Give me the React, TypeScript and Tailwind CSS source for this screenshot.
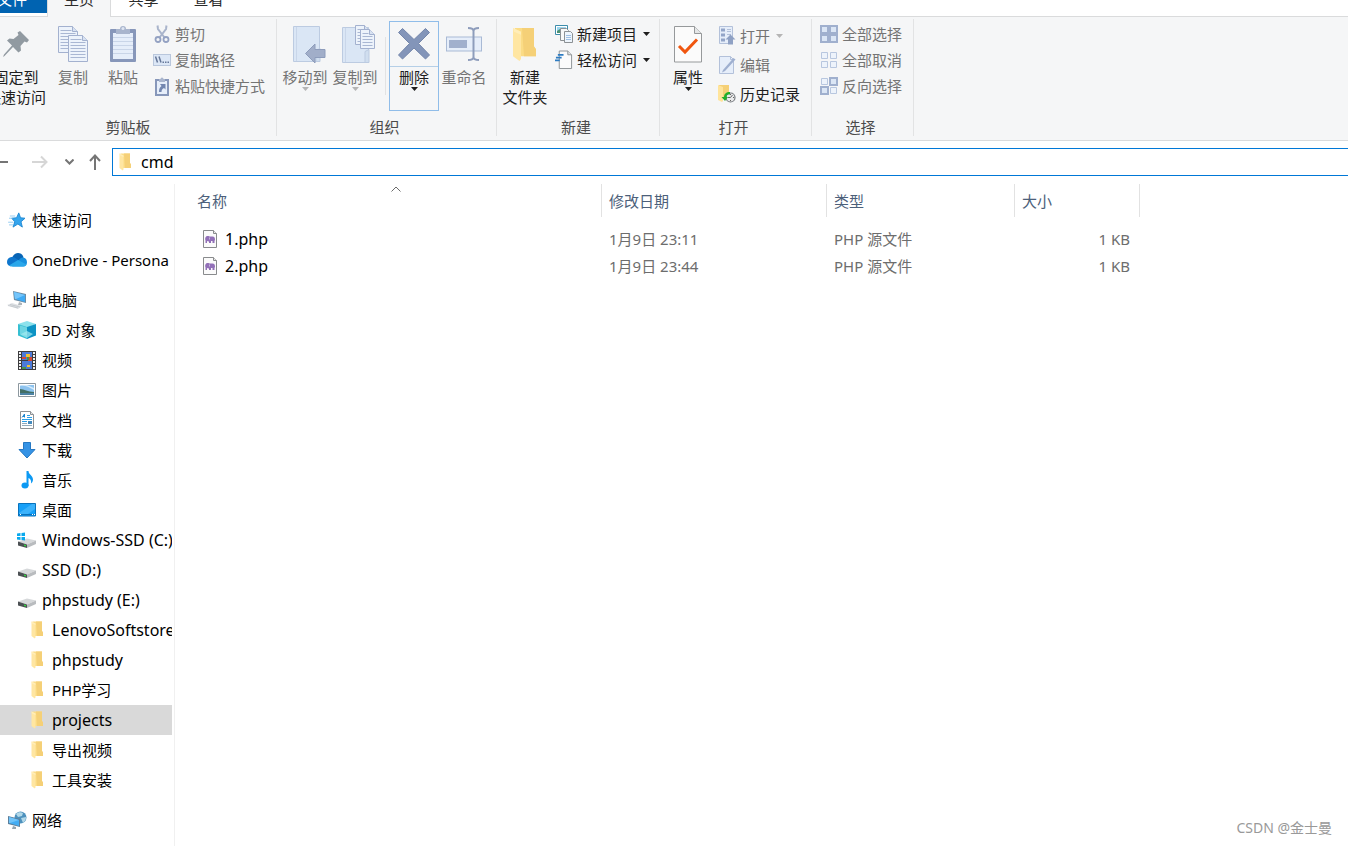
import type { ReactNode } from "react";
import clsx from "clsx";

/* ---------- ribbon icons ---------- */

function PinIcon() {
  return (
    <svg width="28" height="28" viewBox="0 0 28 28" fill="#919aa1">
      <path d="M18 1 27 10 25 12.500 22.500 11.500 18.500 16 19 20.500 16.500 22.500 11 17 2.500 26 1 27 2 24.500 10 15.500 5 10.500 7.500 8.500 11.500 9 16.500 5 15.500 2.500Z" />
    </svg>
  );
}

function Sheet({ x, y, w, h, lines }: { x: number; y: number; w: number; h: number; lines: number[] }) {
  const fold = 5;
  return (
    <g stroke="#a3b1cf">
      <path d={`M${x} ${y}h${w - fold}l${fold} ${fold}v${h - fold}h${-w}z`} fill="#edf3fb" />
      <path d={`M${x + w - fold} ${y}v${fold}h${fold}`} fill="#d8e2f2" />
      {lines.map((l) => (
        <path key={l} d={`M${x + 2} ${y + l}h${l < fold + 1 ? w - fold - 3 : w - 4}`} stroke="#a9b7d3" />
      ))}
    </g>
  );
}

function CopyIcon() {
  return (
    <svg width="32" height="38" viewBox="0 0 32 38" fill="none">
      <Sheet x={1.5} y={1.5} w={19} h={26} lines={[4, 7, 10, 13, 16, 19, 22]} />
      <Sheet x={11.5} y={10.5} w={19} h={26} lines={[4, 7, 10, 13, 16, 19, 22]} />
    </svg>
  );
}

function PasteIcon() {
  return (
    <svg width="28" height="38" viewBox="0 0 28 38">
      <rect x="1" y="4" width="26" height="33" rx="1" fill="#8797ba" />
      <path d="M4 8h20v26H4z" fill="#e6eefa" />
      <path d="M4 12.500h20M4 16.500h20M4 20.500h20M4 24.500h20M4 28.500h20" stroke="#c9d5e8" />
      <path d="M7 4h4a3 3 0 0 1 6 0h4v5H7z" fill="#a9b5cd" />
      <circle cx="14" cy="3.5" r="1.500" fill="#dfe6f2" />
    </svg>
  );
}

function CutIcon() {
  return (
    <svg width="18" height="18" viewBox="0 0 18 18" fill="none" stroke="#93a1c2">
      <path d="M4.500 0.500 5 4 11.500 12.500M13.500 0.500 13 4 6.500 12.500" stroke="#a9b4cb" strokeWidth="2" />
      <ellipse cx="5" cy="14.5" rx="2.5" ry="2.5" strokeWidth="1.8" />
      <ellipse cx="13" cy="14.5" rx="2.5" ry="2.5" strokeWidth="1.8" />
    </svg>
  );
}

function PathIcon() {
  return (
    <svg width="18" height="12" viewBox="0 0 18 12">
      <rect x=".5" y=".5" width="17" height="11" fill="#dce7f6" stroke="#b9c7dc" />
      <path d="M2.500 2.500 4.500 8.500M6 2.500 8 8.500" stroke="#667899" strokeWidth="1.5" />
      <path d="M9.500 7.500H11V9H9.500zM12 7.500h1.500V9H12zM14.500 7.500H16V9h-1.500z" fill="#667899" />
    </svg>
  );
}

function PasteShortcutIcon() {
  return (
    <svg width="14" height="19" viewBox="0 0 14 19">
      <path d="M0 2h14v17H0z" fill="#8797ba" />
      <path d="M2 4h10v13H2z" fill="#e6eefa" />
      <path d="M4 2h1.500a1.500 1.500 0 0 1 3 0H10v3H4z" fill="#a9b5cd" />
      <path d="M5 7h5.500v5.500L9 11c-2 1-2.500 2-2.500 4H4c0-3 .5-4.500 2.500-6z" fill="#7387b0" />
    </svg>
  );
}

function Book() {
  return (
    <>
      <path d="M.5 1.500h26v35H.5z" fill="#dae6f5" stroke="#bccbe1" />
      <path d="M3.500 2v34" stroke="#c9d6e9" />
      <path d="M23 36.500v-11l4-2v13z" fill="#d0deef" stroke="#bccbe1" />
    </>
  );
}

function MoveToIcon() {
  return (
    <svg width="41" height="39" viewBox="-8 0 41 39">
      <Book />
      <path d="M12.500 28.500 22 19v5.500h10v8H22V38z" fill="#a1aec9" stroke="#8d9cbb" />
    </svg>
  );
}

function CopyToIcon() {
  return (
    <svg width="42" height="39" viewBox="-8 0 42 39">
      <g transform="translate(0 1)">
        <Book />
      </g>
      <Sheet x={13.5} y={0.5} w={14} h={19} lines={[4, 7, 10, 13, 16]} />
      <Sheet x={18.5} y={4.5} w={14} h={19} lines={[4, 7, 10, 13, 16]} />
    </svg>
  );
}

function DeleteIcon() {
  return (
    <svg width="34" height="34" viewBox="0 0 34 34">
      <path
        d="M5.500 1.500 17 12.500 28.500 1.500 32.500 5.500 21.500 16.500 32.500 28 28.500 32 17 21 5.500 32 1.500 28 12.500 16.500 1.500 5.500Z"
        fill="#8395b9"
        stroke="#7486ab"
      />
    </svg>
  );
}

function RenameIcon() {
  return (
    <svg width="38" height="36" viewBox="0 0 38 36" fill="none">
      <rect x="1.5" y="11" width="35" height="14" fill="#e6eefa" stroke="#a9bad5" />
      <path d="M4 14h18v8H4z" fill="#a1b0cd" />
      <path
        d="M23 2c3.500 0 5.500 1 5.500 3v26c0 2-2 3-5.500 3M34 2c-3.500 0-5.500 1-5.500 3v26c0 2 2 3 5.500 3"
        stroke="#8e9dbc"
        strokeWidth="2"
      />
    </svg>
  );
}

function FolderIcon({ large = false }: { large?: boolean }) {
  return (
    <svg width={large ? 26 : 13} height={large ? 35 : 18} viewBox="0 0 26 36" preserveAspectRatio="none">
      <path d="M3 1h19v19l2 3v7H3z" fill="#fbdc86" />
      <path d="M10 1h12v19l2 3v7H12z" fill="#f5d077" />
      <path d="M1 1 9 5v28l-1.500 2L1 30z" fill="#ffe6a2" />
      <path d="M1 1 9 5v3L2 5z" fill="#ffedb9" />
    </svg>
  );
}

function NewItemIcon() {
  return (
    <svg width="18" height="18" viewBox="0 0 18 18">
      <path d="M.5.500h12v9H.5z" fill="#fff" stroke="#3d8dab" />
      <path d="M2 2h9v6H2z" fill="#9bd6ef" />
      <path d="M2 6 5 4l3 4H2z" fill="#4d9274" />
      <path d="M5.500 3.500h6l2 2v10h-8z" fill="#f7f8f8" stroke="#8c9194" />
      <path d="M9.500 6.500h6l2 2v9h-8z" fill="#eef5fc" stroke="#8c9194" />
      <path d="M11 10.500h5M11 12.500h5M11 14.500h5" stroke="#9fc0e4" />
    </svg>
  );
}

function EasyAccessIcon() {
  return (
    <svg width="19" height="20" viewBox="0 0 19 20">
      <path d="M4.500.500h9l4 4v14.500h-13z" fill="#fbfbfb" stroke="#8c9194" />
      <path d="M13.500.500v4h4" fill="#e2e4e5" stroke="#8c9194" />
      <path d="M3 4.500h6M1 7.500h6M0 10.500h5" stroke="#2e7cc2" strokeWidth="1.8" />
    </svg>
  );
}

function PropertiesIcon() {
  return (
    <svg width="30" height="37" viewBox="0 0 30 37">
      <path d="M1.500.500h20l7 7v28.500h-27z" fill="#fbfbfb" stroke="#96999b" />
      <path d="M21.500.500v7h7" fill="#e5e7e8" stroke="#96999b" />
      <path d="m6 20 6 6 12-12.500" fill="none" stroke="#f0560f" strokeWidth="3" />
    </svg>
  );
}

function OpenIcon() {
  return (
    <svg width="17" height="19" viewBox="0 0 17 19">
      <path d="M.5.500h13v17H.5z" fill="#e6eefa" stroke="#b3c1da" />
      <path d="M2 2.500h4v3H2zM2 7.500h4v3H2zM2 12.500h4v3H2z" fill="#93a5c8" />
      <path d="M8 3.500h4M8 5.500h4M8 8.500h4" stroke="#b3c1da" />
      <path d="m11.500 8.500 5 5h-2.500v5H9v-5H6.500z" fill="#8fa1c4" />
    </svg>
  );
}

function EditIcon() {
  return (
    <svg width="17" height="18" viewBox="0 0 17 18">
      <path d="M.5.500h11l3 3v14H.5z" fill="#e6eefa" stroke="#b3c1da" />
      <path d="M11.500.500v3h3" fill="none" stroke="#b3c1da" />
      <path d="M4 14 14.500 2l2 1.500L6 15l-3 1.500z" fill="#9fb0d0" />
    </svg>
  );
}

function HistoryIcon() {
  return (
    <svg width="18" height="18" viewBox="0 0 18 18">
      <path d="M1 0h10v14H1z" fill="#f5d077" />
      <path d="M0 0 5 2v14l-1 1-4-2z" fill="#ffe49b" />
      <circle cx="12.5" cy="12.5" r="4.5" fill="#e9eaeb" stroke="#777c80" strokeWidth="1.2" />
      <path d="m12.500 12.500 2-2.500M12.500 12.500H10M12.500 9v1M12.500 15v1M16 12.500h-1" stroke="#666" />
      <path d="M12 7c-4 0-6 2-6 5H3.500L7 16l3-4H8.500c0-2 1-2.500 3.500-2.500z" fill="#21b02b" />
    </svg>
  );
}

function SelectionIcon({ filled }: { filled: boolean[] }) {
  return (
    <svg width="18" height="18" viewBox="0 0 18 18">
      {filled.map((on, i) => {
        const x = (i % 2) * 9;
        const y = Math.floor(i / 2) * 9;
        return on ? (
          <g key={i}>
            <path d={`M${x} ${y}h9v9h-9z`} fill="#a0b0ce" />
            <path d={`M${x + 2} ${y + 2}h5v5h-5z`} fill="#dbe6f5" />
          </g>
        ) : (
          <path key={i} d={`M${x + 1.5} ${y + 1.5}h6v6h-6z`} fill="#edf3fb" stroke="#b8c7df" />
        );
      })}
    </svg>
  );
}

function Caret() {
  return (
    <svg width="7" height="4" viewBox="0 0 7 4" fill="currentColor">
      <path d="M0 0h7L3.500 4z" />
    </svg>
  );
}

/* ---------- navigation pane icons ---------- */

function QuickAccessIcon() {
  return (
    <svg width="18" height="16" viewBox="0 0 20 18">
      <path d="m12 1 2 5.500 5 .5-4.500 4 1.500 6-5-3.500L5.500 17l2-6L4 7l5.500-.5z" fill="#34a5ee" stroke="#1c86d1" />
      <path d="M2 4.500h6M1 7h4M0 11.500h6M1 14.500h5" stroke="#8cc8f0" />
    </svg>
  );
}

function OneDriveIcon() {
  return (
    <svg width="20" height="14" viewBox="0 0 20 14">
      <path d="M5 5C6 2 8.500 0 11 0c3 0 5 2 5.500 4.500L10 9z" fill="#0864b5" />
      <path d="M4.500 4C6.500 3.500 8 4.500 13 8L3 13C1 12.500 0 11 0 9c0-3 2-4.500 4.500-5z" fill="#0f76cd" />
      <path d="M12 7c1-2 3-2.500 4.500-2.500C19 5 20 7 20 9.500S18 13.500 16 13.500H5z" fill="#1890df" />
      <path d="M11 7 2 12.500c1 1 2 1 3 1h11c1.500 0 3-.5 3.500-2z" fill="#2aa7ea" />
    </svg>
  );
}

function ComputerIcon() {
  return (
    <svg width="20" height="18" viewBox="0 0 20 18">
      <path d="m6 0 13 3v9L7 9z" fill="#6d8da4" />
      <path d="m7 1 11 3v7L8 8z" fill="#3eaaf5" />
      <path d="m7 1 11 3-9 4H8z" fill="#74c5fb" />
      <path d="m12 11 3 1v2h-4z" fill="#aeb5ba" />
      <path d="m0 14 5-2 10 3-4 3z" fill="#dfe2e5" />
      <path d="m1 14.500 10 2.500M3 13.500l10 2.500" stroke="#b9bfc4" strokeWidth=".7" />
    </svg>
  );
}

function CubeIcon() {
  return (
    <svg width="18" height="18" viewBox="0 0 18 18">
      <path d="m9 0 9 3-9 4-9-4z" fill="#8ce2ec" />
      <path d="m0 3 9 3v12l-9-3.500z" fill="#35bfd2" />
      <path d="m18 3-9 3v12l9-3.500z" fill="#0c93c4" />
      <path d="m2 4.500 7 2v8L2 13z" fill="#6ed5e2" />
      <path d="m9 10 6 3-6 4-7-3.500z" fill="#a5ebf2" opacity=".7" />
    </svg>
  );
}

function VideoIcon() {
  return (
    <svg width="18" height="19" viewBox="0 0 18 19">
      <path d="M0 0h18v19H0z" fill="#3d3d3f" />
      <path d="M2 1v18M16 1v18" stroke="#f2f2f2" strokeWidth="2" strokeDasharray="2 1" />
      <path d="M4 1h10v8H4zM4 10h10v8H4z" fill="#4d7bd8" />
      <path d="M8 3h4v3H8zM9 14h3v2H9z" fill="#f5c22d" />
      <path d="M4 6h4v2H4zM10 6h4v4h-4z" fill="#d44a35" />
      <path d="M9 6h2v3H9zM4 16h4v2H4z" fill="#48944a" />
    </svg>
  );
}

function PictureIcon() {
  return (
    <svg width="18" height="14" viewBox="0 0 18 14">
      <path d="M.5.500h17v13H.5z" fill="#fff" stroke="#8d989f" />
      <path d="M2 2h14v10H2z" fill="#8dc3ef" />
      <path d="M2 3c4-1 8 0 14 4V5L9 2H2z" fill="#d5ebfb" />
      <path d="M2 6c4 0 8 3 14 3v1H2z" fill="#426f66" />
      <path d="M2 10h14v2H2z" fill="#4c83a5" />
    </svg>
  );
}

function DocumentIcon() {
  return (
    <svg width="14" height="18" viewBox="0 0 14 18">
      <path d="M.5.500h10l3 3v14H.5z" fill="#fff" stroke="#8d9194" />
      <path d="M10.500.500v3h3" fill="#e5e5e5" stroke="#8d9194" />
      <path d="M2 6.500 4.500 3v3.500M3 5.500h2" stroke="#1d86d0" fill="none" />
      <path d="M7 4.500h3M7 6.500h5M2 8.500h10M2 10.500h5" stroke="#2b9fe8" />
      <path d="M2 12.500h5M2 14.500h10" stroke="#92aabb" />
      <path d="M8 10h4v3H8z" fill="#438abd" />
    </svg>
  );
}

function DownloadIcon() {
  return (
    <svg width="18" height="17" viewBox="0 0 18 17">
      <path d="M5.500.500h7v7H17L9 16 1 7.500h4.500z" fill="#3593e5" stroke="#2578c3" />
    </svg>
  );
}

function MusicIcon() {
  return (
    <svg width="18" height="18" viewBox="0 0 18 18">
      <ellipse cx="7" cy="14.5" rx="3.5" ry="3" fill="#0c99f3" />
      <path d="M8.500 0h2c0 3.500 4.500 4.500 4.500 8.500 0 2-1 3-2 4 .5-3-.5-4.500-2.500-5.500v8h-2z" fill="#0c99f3" />
    </svg>
  );
}

function DesktopIcon() {
  return (
    <svg width="18" height="14" viewBox="0 0 18 14">
      <path d="M.5.500h17v12.500H.5z" fill="#16a0f8" stroke="#0973bd" />
      <path d="M1 10 14 1h3v5l-7 5H1z" fill="#3bb2fb" />
      <path d="M1 11.500h16" stroke="#0971ba" />
      <path d="M2 11.500h1M14 11.500h1M16 11.500h1" stroke="#fff" />
    </svg>
  );
}

function DriveIcon({ system = false }: { system?: boolean }) {
  return (
    <svg width="20" height="16" viewBox="0 0 20 16">
      <path d="m1 9.500 9-3 9 2-9 4z" fill="#d6d8da" />
      <path d="m1 9.500 9 3V16l-9-2.500z" fill="#4c5053" />
      <path d="m10 12.500 9-4v3.500l-9 4z" fill="#b9bcbf" />
      <path d="m7 12.500 2 .5v1.500L7 14z" fill="#31d33e" />
      {system && (
        <path d="M0 1.500 3.500 1v3H0zM4.500 1 8 .5V4H4.500zM0 5h3.500v3L0 7.500zM4.500 5H8v3.500L4.500 8z" fill="#08a9ee" />
      )}
    </svg>
  );
}

function NetworkIcon() {
  return (
    <svg width="19" height="18" viewBox="0 0 19 18">
      <circle cx="12.5" cy="6.5" r="6" fill="#4d91bd" />
      <path d="M8 3c2-2 5-2 7-1l-1 3-4 1zM13 7l5-1c0 3-1 4-3 6z" fill="#b2d8e8" />
      <path d="m0 5 12 3v8L0 13z" fill="#5c7f9b" />
      <path d="m1 6 10 3v6L1 12z" fill="#43adf4" />
      <path d="m1 6 10 3-9 3H1z" fill="#70c4fa" />
      <path d="m5 15 3 1v2H4z" fill="#95a5af" />
    </svg>
  );
}

function PhpFileIcon() {
  return (
    <svg width="14" height="18" viewBox="0 0 14 18">
      <path d="M.5.500h10l3 3v14H.5z" fill="#fbfbfb" stroke="#898b8d" />
      <path d="M10.500.500v3h3" fill="#e9e9e9" stroke="#898b8d" />
      <path
        d="M4.500 6C6 6 6.500 6.500 7 6.500h2.500C11.500 6.500 12.200 8 12 10.500H11.500V13H9.500v-2H8v2H6v-1.500c-1 0-1.500-.2-2-.5v2H2.500v-2.500C1.700 8.500 2.500 6 4.500 6z"
        fill="#9270b8"
      />
      <path d="M6.500 7.500v2" stroke="#c4b2da" />
    </svg>
  );
}

/* ---------- ribbon pieces ---------- */

function Group({
  label,
  className,
  bodyClassName = "pl-[3px]",
  children,
}: {
  label: string;
  className: string;
  bodyClassName?: string;
  children: ReactNode;
}) {
  return (
    <section
      aria-label={label}
      className={clsx("flex shrink-0 flex-col justify-between border-r border-[#e2e3e4]", className)}
    >
      <div className={clsx("flex pt-0.5", bodyClassName)}>{children}</div>
      <div className="pr-1 pb-px text-center leading-4 text-[#4c4c4c]">{label}</div>
    </section>
  );
}

function BigButton({
  icon,
  label,
  disabled,
  caret,
  className = "w-[50px]",
}: {
  icon: ReactNode;
  label: string[];
  disabled?: boolean;
  caret?: boolean;
  className?: string;
}) {
  return (
    <button
      type="button"
      disabled={disabled}
      className={clsx(
        "flex h-[90px] shrink-0 flex-col items-center whitespace-nowrap leading-5",
        disabled ? "text-[#747474]" : "text-[#1e1e1e]",
        className
      )}
    >
      <span className="flex h-[46px] shrink-0 items-center justify-center">{icon}</span>
      {label.map((line) => (
        <span key={line}>{line}</span>
      ))}
      {caret && (
        <span className={disabled ? "text-[#b5b5b5]" : "text-[#1e1e1e]"}>
          <Caret />
        </span>
      )}
    </button>
  );
}

function SmallButton({
  icon,
  label,
  disabled,
  caret,
  tall,
}: {
  icon: ReactNode;
  label: string;
  disabled?: boolean;
  caret?: boolean;
  tall?: boolean;
}) {
  return (
    <button
      type="button"
      disabled={disabled}
      className={clsx(
        "flex items-center whitespace-nowrap",
        tall ? "h-[29px]" : "h-[26px]",
        disabled ? "text-[#747474]" : "text-[#1e1e1e]"
      )}
    >
      <span className="mr-1 flex w-[18px] justify-center">{icon}</span>
      {label}
      {caret && (
        <span className={clsx("ml-1.5", disabled && "text-[#b5b5b5]")}>
          <Caret />
        </span>
      )}
    </button>
  );
}

function Ribbon() {
  return (
    <div className="flex h-[124px] overflow-hidden border-b border-[#dadbdc] bg-[#f5f6f7] pt-0.5 pb-1">
      <Group label="剪贴板" className="-ml-4 w-[293px]" bodyClassName="">
        <BigButton icon={<PinIcon />} label={["固定到", "快速访问"]} className="w-16" />
        <BigButton icon={<CopyIcon />} label={["复制"]} disabled />
        <BigButton icon={<PasteIcon />} label={["粘贴"]} disabled />
        <div className="ml-[5px] flex flex-col items-start">
          <SmallButton icon={<CutIcon />} label="剪切" disabled />
          <SmallButton icon={<PathIcon />} label="复制路径" disabled />
          <SmallButton icon={<PasteShortcutIcon />} label="粘贴快捷方式" disabled />
        </div>
      </Group>

      <Group label="组织" className="w-[220px]">
        <BigButton icon={<MoveToIcon />} label={["移动到"]} disabled caret />
        <BigButton icon={<CopyToIcon />} label={["复制到"]} disabled caret />
        <div className="my-4 mr-[3px] ml-[5px] w-px bg-[#e2e3e4]" />
        <button
          type="button"
          className="flex h-[90px] w-[50px] flex-col items-center border border-[#90bde9] leading-5 text-[#1e1e1e]"
        >
          <span className="flex h-[45px] w-full shrink-0 items-center justify-center border-b border-[#b5cfe7]">
            <DeleteIcon />
          </span>
          <span>删除</span>
          <Caret />
        </button>
        <BigButton icon={<RenameIcon />} label={["重命名"]} disabled />
      </Group>

      <Group label="新建" className="w-[163px]">
        <BigButton icon={<FolderIcon large />} label={["新建", "文件夹"]} />
        <div className="ml-[5px] flex flex-col items-start">
          <SmallButton icon={<NewItemIcon />} label="新建项目" caret />
          <SmallButton icon={<EasyAccessIcon />} label="轻松访问" caret />
        </div>
      </Group>

      <Group label="打开" className="w-[152px]">
        <BigButton icon={<PropertiesIcon />} label={["属性"]} caret />
        <div className="ml-[5px] flex flex-col items-start">
          <SmallButton icon={<OpenIcon />} label="打开" disabled caret tall />
          <SmallButton icon={<EditIcon />} label="编辑" disabled tall />
          <SmallButton icon={<HistoryIcon />} label="历史记录" tall />
        </div>
      </Group>

      <Group label="选择" className="w-[102px]" bodyClassName="pl-2">
        <div className="flex flex-col items-start">
          <SmallButton icon={<SelectionIcon filled={[true, true, true, true]} />} label="全部选择" disabled />
          <SmallButton icon={<SelectionIcon filled={[false, false, false, false]} />} label="全部取消" disabled />
          <SmallButton icon={<SelectionIcon filled={[false, true, true, false]} />} label="反向选择" disabled />
        </div>
      </Group>
    </div>
  );
}

function Tabs() {
  return (
    <div className="flex h-[17px] items-end overflow-hidden leading-5 text-[#2b2b2b]">
      <div className="flex w-[47px] shrink-0 border-b border-[#dadbdc] pb-[3px]">
        <button type="button" className="-ml-1 flex h-7 w-[51px] items-end bg-[#0063b1] pb-1 pl-px text-white">
          文件
        </button>
      </div>
      <button
        type="button"
        className="flex h-8 w-16 shrink-0 justify-center border-x border-[#dadbdc] bg-[#f5f6f7] pt-1"
      >
        主页
      </button>
      <div className="flex h-8 grow border-b border-[#dadbdc] pt-1">
        <button type="button" className="flex w-[65px] justify-center">共享</button>
        <button type="button" className="flex w-[65px] justify-center">查看</button>
      </div>
    </div>
  );
}

function AddressBar() {
  return (
    <div className="flex h-[35px] items-end overflow-hidden text-[#757575]">
      <div className="flex h-7 items-center">
        <button type="button" aria-label="后退" className="-ml-2 w-4">
          <svg width="16" height="14" viewBox="0 0 16 14" fill="none" stroke="currentColor" strokeWidth="2">
            <path d="M16 7H2M7 2 2 7l5 5" />
          </svg>
        </button>
        <button type="button" aria-label="前进" disabled className="ml-6 w-4 text-[#d6d6d6]">
          <svg width="16" height="14" viewBox="0 0 16 14" fill="none" stroke="currentColor" strokeWidth="2">
            <path d="M0 7h14M9 1.500l5.500 5.500L9 12.500" />
          </svg>
        </button>
        <button type="button" aria-label="最近浏览的位置" className="ml-[17px]">
          <svg width="9" height="6" viewBox="0 0 9 6" fill="none" stroke="currentColor" strokeWidth="2">
            <path d="m.5.500 4 4 4-4" />
          </svg>
        </button>
        <button type="button" aria-label="上移" className="ml-[15px]">
          <svg width="12" height="16" viewBox="0 0 12 16" fill="none" stroke="currentColor" strokeWidth="2">
            <path d="M6 16V2M1 7l5-5.500L11 7" />
          </svg>
        </button>
      </div>
      <label className="ml-[11px] flex h-7 grow items-center border border-r-0 border-[#0078d7] bg-white pl-1.5">
        <FolderIcon />
        <input
          type="text"
          aria-label="地址"
          defaultValue="cmd"
          className="ml-[9px] min-w-0 grow bg-transparent text-base text-black outline-none"
        />
      </label>
    </div>
  );
}

/* ---------- navigation pane ---------- */

type NavItem = { label: string; icon: ReactNode; level: 0 | 1 | 2; latin?: boolean; selected?: boolean };

const navSections: NavItem[][] = [
  [{ label: "快速访问", icon: <QuickAccessIcon />, level: 0 }],
  [{ label: "OneDrive - Persona", icon: <OneDriveIcon />, level: 0 }],
  [
    { label: "此电脑", icon: <ComputerIcon />, level: 0 },
    { label: "3D 对象", icon: <CubeIcon />, level: 1 },
    { label: "视频", icon: <VideoIcon />, level: 1 },
    { label: "图片", icon: <PictureIcon />, level: 1 },
    { label: "文档", icon: <DocumentIcon />, level: 1 },
    { label: "下载", icon: <DownloadIcon />, level: 1 },
    { label: "音乐", icon: <MusicIcon />, level: 1 },
    { label: "桌面", icon: <DesktopIcon />, level: 1 },
    { label: "Windows-SSD (C:)", icon: <DriveIcon system />, level: 1, latin: true },
    { label: "SSD (D:)", icon: <DriveIcon />, level: 1, latin: true },
    { label: "phpstudy (E:)", icon: <DriveIcon />, level: 1, latin: true },
    { label: "LenovoSoftstore", icon: <FolderIcon />, level: 2, latin: true },
    { label: "phpstudy", icon: <FolderIcon />, level: 2, latin: true },
    { label: "PHP学习", icon: <FolderIcon />, level: 2 },
    { label: "projects", icon: <FolderIcon />, level: 2, latin: true, selected: true },
    { label: "导出视频", icon: <FolderIcon />, level: 2 },
    { label: "工具安装", icon: <FolderIcon />, level: 2 },
  ],
  [{ label: "网络", icon: <NetworkIcon />, level: 0 }],
];

const indent = { 0: "pl-[7px]", 1: "pl-[17px]", 2: "pl-[27px]" };

function NavPane() {
  return (
    <nav className="flex w-[175px] shrink-0 flex-col gap-2.5 border-r border-[#f0f0f0] pt-[21px] pr-0.5">
      {navSections.map((section) => (
        <ul key={section[0].label}>
          {section.map((item) => (
            <li key={item.label}>
              <a
                href="#"
                className={clsx(
                  "flex h-[30px] items-center overflow-hidden whitespace-nowrap text-black",
                  indent[item.level],
                  item.latin && "text-base",
                  item.selected && "bg-[#d9d9d9]"
                )}
              >
                <span className="mr-[5px] flex w-5 shrink-0 justify-center">{item.icon}</span>
                {item.label}
              </a>
            </li>
          ))}
        </ul>
      ))}
    </nav>
  );
}

/* ---------- file list ---------- */

const files = [
  { name: "1.php", modified: "1月9日 23:11", type: "PHP 源文件", size: "1 KB" },
  { name: "2.php", modified: "1月9日 23:44", type: "PHP 源文件", size: "1 KB" },
];

const columns = [
  { label: "名称", width: "w-[412px]", sorted: true },
  { label: "修改日期", width: "w-[225px]" },
  { label: "类型", width: "w-[188px]" },
  { label: "大小", width: "w-[125px]" },
];

function FileList() {
  return (
    <main className="min-w-0 grow overflow-hidden pl-[15px]">
      <table className="w-[950px] table-fixed text-left text-[#6d6d6d]">
        <thead>
          <tr>
            {columns.map((col) => (
              <th key={col.label} className={clsx("p-0 pb-2 font-normal", col.width)}>
                <button
                  type="button"
                  className="relative flex h-[33px] w-full items-center border-r border-[#e2e2e2] pl-[7px] text-[#4c607a]"
                >
                  {col.label}
                  {col.sorted && (
                    <svg
                      className="absolute top-0.5 left-1/2 -translate-x-1/2"
                      width="10"
                      height="6"
                      viewBox="0 0 10 6"
                      fill="none"
                      stroke="#6b6b6b"
                    >
                      <path d="M.5 5.500 5 1l4.500 4.500" />
                    </svg>
                  )}
                </button>
              </th>
            ))}
          </tr>
        </thead>
        <tbody>
          {files.map((file) => (
            <tr key={file.name} className="h-[27px]">
              <td className="p-0 pl-[13px]">
                <a href="#" className="flex items-center gap-2 text-base leading-5 text-black">
                  <PhpFileIcon />
                  {file.name}
                </a>
              </td>
              <td className="p-0 pl-[7px]">{file.modified}</td>
              <td className="p-0 pl-[7px]">{file.type}</td>
              <td className="p-0 pr-2.5 text-right">{file.size}</td>
            </tr>
          ))}
        </tbody>
      </table>
    </main>
  );
}

export default function App() {
  return (
    <div className="relative flex min-h-screen flex-col bg-white font-['Noto_Sans','Noto_Sans_CJK_SC',sans-serif] text-[15px] leading-5">
      <Tabs />
      <Ribbon />
      <AddressBar />
      <div className="flex grow pt-2">
        <NavPane />
        <FileList />
      </div>
      <div className="absolute right-4 bottom-2 text-sm leading-5 text-[#999999]">CSDN @金士曼</div>
    </div>
  );
}
